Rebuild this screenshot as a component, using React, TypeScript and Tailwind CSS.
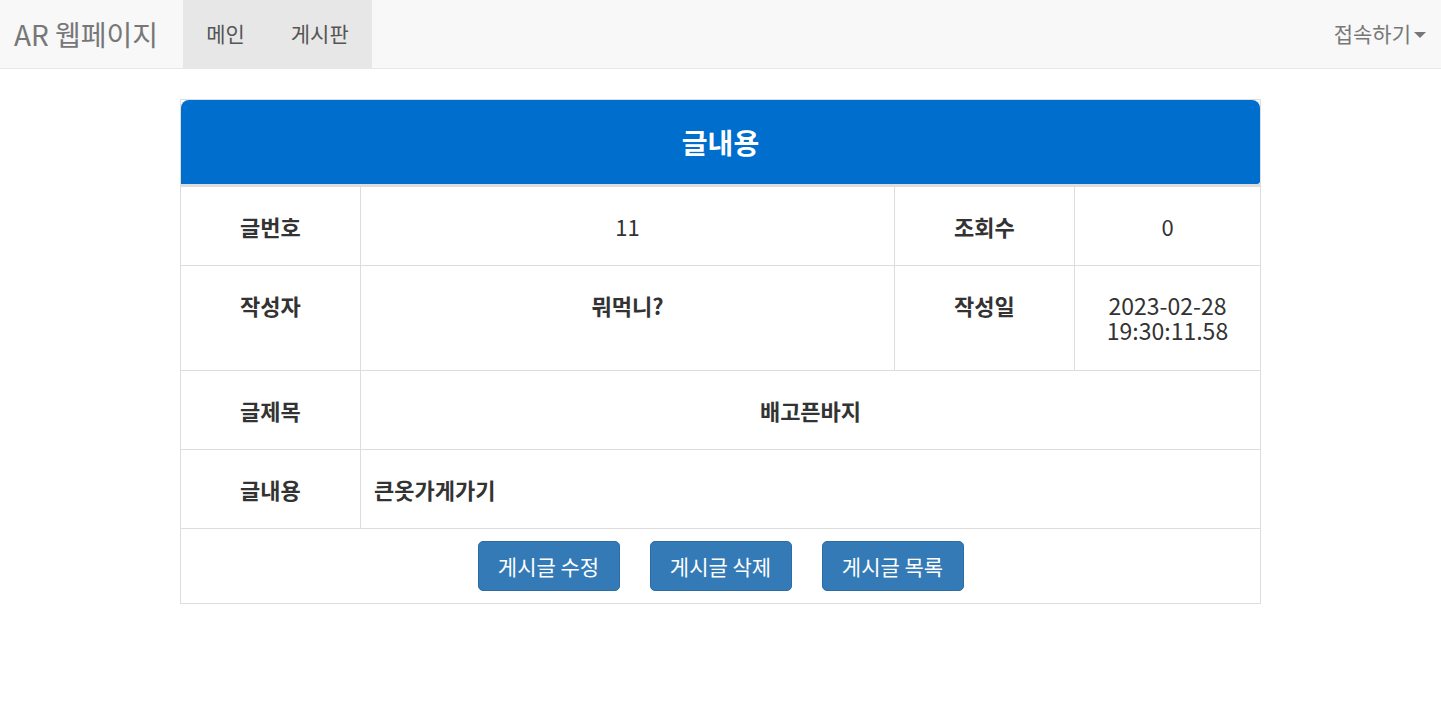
import React from "react";

const font = { fontFamily: '"Noto Sans CJK KR", "Noto Sans", sans-serif' };

export default function App() {
  const th = "border border-[#dddddd] text-center align-top px-2 pt-[26px] pb-[26px] font-bold text-[22px] leading-[26px] text-[#333]";
  const td = "border border-[#dddddd] text-center align-top px-2 pt-[26px] pb-[26px] font-bold text-[22px] leading-[26px] text-[#333]";
  const btn = "h-[50px] w-[142px] rounded-[5px] bg-[#337ab7] border border-[#2e6da4] text-white text-[21px] leading-none";
  return (
    <div className="min-h-[715px] bg-white" style={font}>
      <nav className="h-[69px] bg-[#f8f8f8] border-b border-[#e7e7e7] flex items-stretch">
        <div className="pl-[14px] pr-[25px] flex items-center text-[28px] text-[#777]">AR 웹페이지</div>
        <div className="flex bg-[#e7e7e7]">
          <div className="px-[23px] flex items-center text-[21px] text-[#555]">메인</div>
          <div className="px-[23px] flex items-center text-[21px] text-[#555]">게시판</div>
        </div>
        <div className="flex-1" />
        <div className="pr-[15px] flex items-center text-[21px] text-[#777]">
          접속하기
          <span className="ml-[3px] mt-[2px] inline-block w-0 h-0 border-l-[6px] border-r-[6px] border-t-[6px] border-l-transparent border-r-transparent border-t-[#777]" />
        </div>
      </nav>
      <div className="pt-[30px] flex justify-center">
        <table className="w-[1080px] border-collapse border border-[#dddddd] table-fixed">
          <colgroup>
            <col className="w-[180px]" />
            <col className="w-[534px]" />
            <col className="w-[180px]" />
            <col className="w-[186px]" />
          </colgroup>
          <thead>
            <tr>
              <th colSpan={4} className="p-0 border border-[#dddddd] border-b-[3px]">
                <div className="h-[84px] bg-[#006ecd] rounded-t-[8px] rounded-br-[3px] flex items-center justify-center text-white text-[28px] font-bold">
                  글내용
                </div>
              </th>
            </tr>
          </thead>
          <tbody>
            <tr>
              <td className={th}>글번호</td>
              <td className={td + " font-normal"}>11</td>
              <td className={th}>조회수</td>
              <td className={td + " font-normal"}>0</td>
            </tr>
            <tr>
              <td className={th}>작성자</td>
              <td className={td}>뭐먹니?</td>
              <td className={th}>작성일</td>
              <td className="border border-[#dddddd] text-center align-top px-1 pt-[27px] pb-[27px] text-[23px] leading-[25px] text-[#333]">
                2023-02-28<br />19:30:11.58
              </td>
            </tr>
            <tr>
              <td className={th}>글제목</td>
              <td colSpan={3} className={td}>배고픈바지</td>
            </tr>
            <tr>
              <td className={th}>글내용</td>
              <td colSpan={3} className={td + " text-left px-[13px]"}>큰옷가게가기</td>
            </tr>
            <tr>
              <td colSpan={4} className="border border-[#dddddd] py-[12px]">
                <div className="flex justify-center gap-[30px]">
                  <button className={btn}>게시글 수정</button>
                  <button className={btn}>게시글 삭제</button>
                  <button className={btn}>게시글 목록</button>
                </div>
              </td>
            </tr>
          </tbody>
        </table>
      </div>
    </div>
  );
}
